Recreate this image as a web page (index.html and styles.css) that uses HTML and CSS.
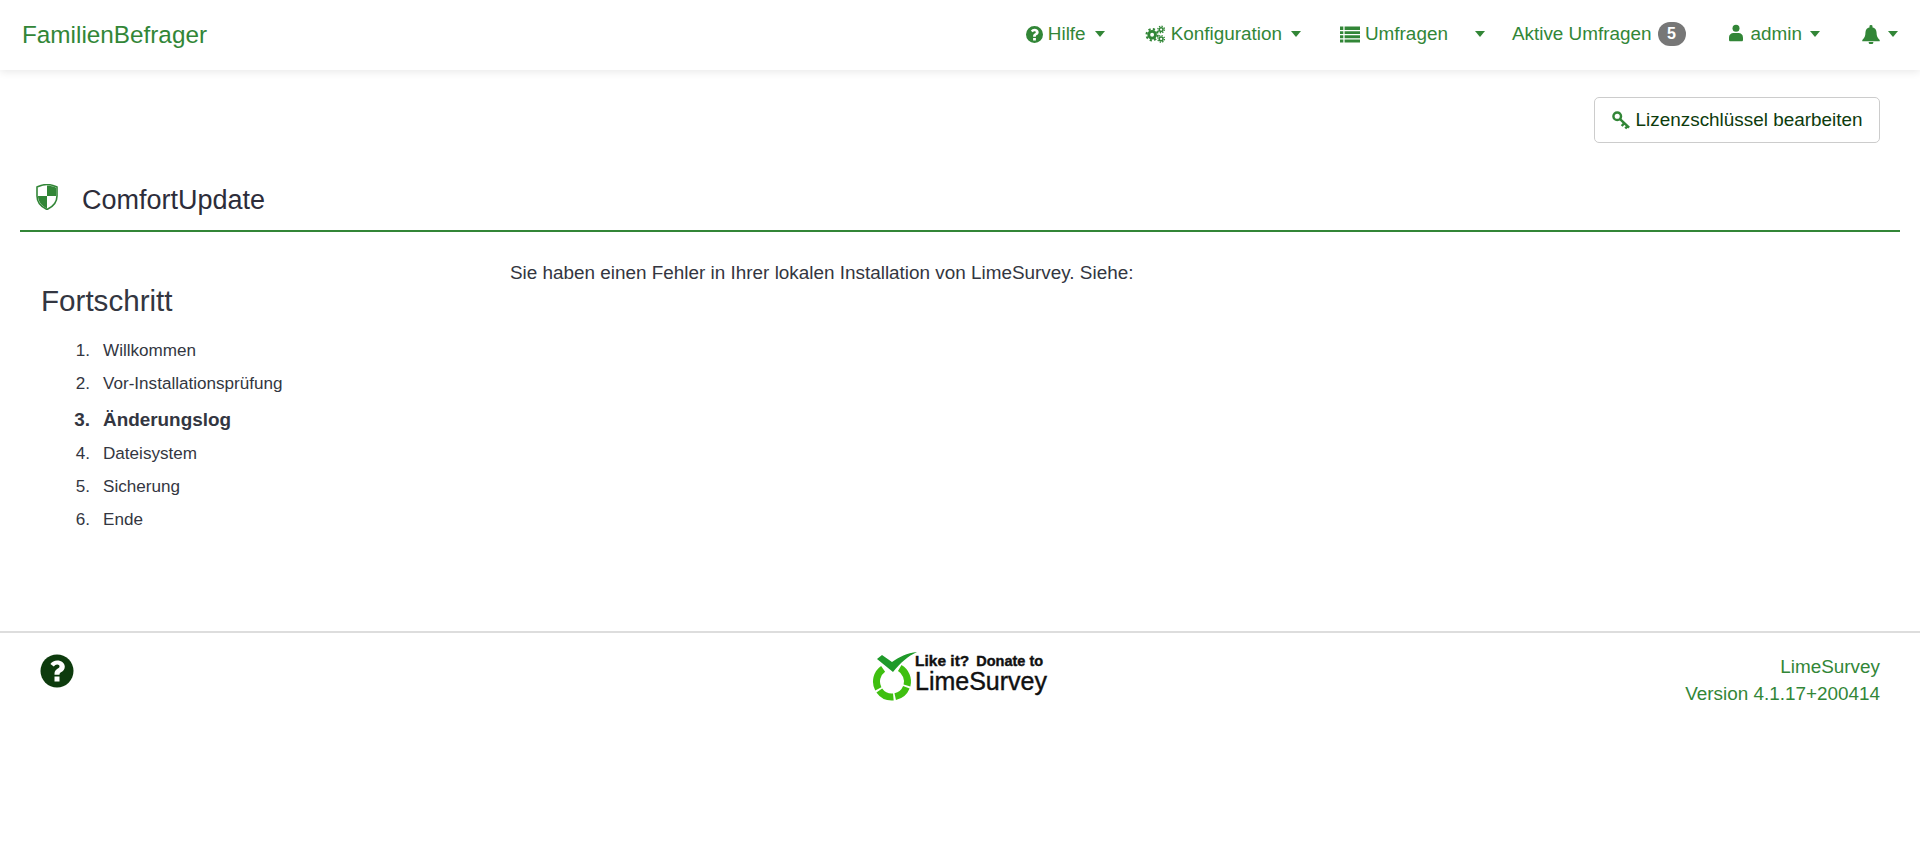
FILE: index.html
```html
<!DOCTYPE html>
<html>
<head>
  <meta charset="UTF-8">
  <title>ComfortUpdate</title>
  <link rel="stylesheet" href="styles.css">
</head>
<body>
  <nav class="navbar">
    <a class="brand">FamilienBefrager</a>
    <ul class="nav-items">
      <li class="nav-hilfe">
        <svg class="icon" viewBox="1 1 22 22"><path fill-rule="evenodd" d="M12 1a11 11 0 1 0 0 22 11 11 0 0 0 0-22zM10.200 16.500h3.600v3.300h-3.600zM12 4.500c3 0 5.400 1.800 5.400 4.500 0 2-1.200 3-2.400 3.800-.9.600-1.200 1-1.200 1.900v.3h-3.600v-.7c0-1.800.8-2.800 2-3.600.9-.6 1.500-1 1.500-1.700 0-.8-.7-1.300-1.600-1.300-1 0-1.700.5-2.400 1.400L7.300 7.100C8.300 5.500 10 4.500 12 4.500z"/></svg>
        Hilfe <span class="caret"></span>
      </li>
      <li class="nav-konfig">
        <svg class="icon icon-gears" viewBox="1 0 27 24"><g fill="none" stroke="currentColor"><circle cx="10" cy="13" r="4.500" stroke-width="3.800"/><circle cx="10" cy="13" r="7.500" stroke-width="2.800" stroke-dasharray="2.900 3"/><circle cx="22" cy="6" r="2.500" stroke-width="2"/><circle cx="22" cy="6" r="4.400" stroke-width="1.800" stroke-dasharray="1.800 1.650"/><circle cx="22" cy="18.500" r="2.500" stroke-width="2"/><circle cx="22" cy="18.500" r="4.400" stroke-width="1.800" stroke-dasharray="1.800 1.650"/></g></svg>
        Konfiguration <span class="caret"></span>
      </li>
      <li class="nav-umfragen">
        <svg class="icon icon-wide" viewBox="0 1 24 19"><path d="M0 1h4v4H0zM5.500 1H24v4H5.500zM0 6.500h4v3.500H0zM5.500 6.500H24v3.500H5.500zM0 11.500h4v3.500H0zM5.500 11.500H24v3.500H5.500zM0 16.500h4V20H0zM5.500 16.500H24V20H5.500z"/></svg>
        Umfragen
      </li>
      <li class="nav-split"><span class="caret"></span></li>
      <li class="nav-aktiv">Aktive Umfragen <span class="badge">5</span></li>
      <li class="nav-admin">
        <svg class="icon icon-user" viewBox="0 0 16 20"><circle cx="8" cy="4.500" r="4"/><path d="M1.500 19.500c-.8 0-1.500-.6-1.500-1.500v-3c0-3 2.500-5 5-5h6c2.500 0 5 2 5 5v3c0 .9-.7 1.500-1.500 1.500z"/></svg>
        admin <span class="caret"></span>
      </li>
      <li class="nav-bell">
        <svg class="icon icon-bell" viewBox="1 0 22 24"><path d="M12 0a2 2 0 0 0-1.700 2.700C7 3.400 5 6 5 9.500c0 5-1.500 7-4 9.500v1.500h22V19c-2.500-2.500-4-4.500-4-9.500 0-3.500-2-6.100-5.300-6.800A2 2 0 0 0 12 0zM9 21.500a3 3 0 0 0 6 0z"/></svg>
        <span class="caret"></span>
      </li>
    </ul>
  </nav>

  <div class="toolbar">
    <button class="btn">
      <svg class="icon-key" viewBox="0 0 20 20"><g fill="none" stroke="currentColor"><circle cx="5.500" cy="5.500" r="4" stroke-width="2.600"/><path d="M8.500 8.500l9.500 9M13 12.800l-2.800 3M16.300 15.900l-2.300 2.500" stroke-width="2.600"/></g></svg>
      Lizenzschlüssel bearbeiten
    </button>
  </div>

  <div class="page-title">
    <svg class="icon-shield" viewBox="0 0 22 26"><path d="M11 .500C7 .500 4 1.800 1 3v9c0 6 4.500 11 10 13.500C16.500 23 21 18 21 12V3C18 1.800 15 .500 11 .500z" fill="#fff" stroke="#328637" stroke-width="1.600"/><path d="M11 1.500c3.500 0 6.500 1 9 2.200V12h-9zM11 12v12.500c-5-2.500-9-7-9-12.500z" fill="#328637"/></svg>
    <h3>ComfortUpdate</h3>
  </div>

  <div class="content">
    <aside class="sidebar">
      <h2>Fortschritt</h2>
      <ol class="steps">
        <li>Willkommen</li>
        <li>Vor-Installationsprüfung</li>
        <li class="on">Änderungslog</li>
        <li>Dateisystem</li>
        <li>Sicherung</li>
        <li>Ende</li>
      </ol>
    </aside>
    <div class="message">Sie haben einen Fehler in Ihrer lokalen Installation von LimeSurvey. Siehe:</div>
  </div>

  <footer class="footer">
    <div class="foot-left">
      <svg class="icon-help" viewBox="0 0 34 34"><circle cx="17" cy="17" r="16.500" fill="#0d3b0d"/><path fill="#fff" d="M14.500 22.500h5v5h-5zM17.200 6.500c4.300 0 7.600 2.500 7.600 6.300 0 2.800-1.700 4.200-3.400 5.300-1.300.9-1.900 1.400-1.900 2.700h-5v-1c0-2.500 1.200-3.900 2.900-5 1.300-.9 2.100-1.400 2.100-2.400 0-1.100-1-1.800-2.300-1.800-1.400 0-2.400.7-3.400 2l-3.400-2.500c1.500-2.300 3.900-3.600 6.800-3.600z"/></svg>
    </div>
    <div class="foot-logo">
      <svg class="logo-ring" viewBox="0 0 46 50">
        <g fill="none" stroke="#3fbf10" stroke-width="7"><path d="M27.750 16.080A15.500 15.500 0 0 1 34.970 33.510"/><path d="M34.370 35.310A15.500 15.500 0 0 1 23.220 44.660"/><path d="M21.350 44.940A15.500 15.500 0 0 1 7.300 38.390"/><path d="M6.310 36.780A15.500 15.500 0 0 1 11.110 16.800"/></g>
        <path fill="#1f9a2a" d="M5 7L10 3 20 10C27 5 35 1 45 0 36 4 28 11 21 20z"/>
      </svg>
      <div class="logo-text">
        <div class="logo-top"><span class="like">Like it?</span> Donate to</div>
        <div class="logo-name">LimeSurvey</div>
      </div>
    </div>
    <div class="foot-right">
      <div>LimeSurvey</div>
      <div>Version 4.1.17+200414</div>
    </div>
  </footer>
</body>
</html>
```

FILE: styles.css
```css
body {
  font-family: "Liberation Sans", Arial, sans-serif;
  font-size: 18.9px;
  color: #333641;
  background: #fff;
  margin: 0;
}
.navbar {
  height: 70px;
  display: flex;
  justify-content: space-between;
  align-items: center;
  box-shadow: 0 2px 8px rgba(0,0,0,0.09);
  color: #328637;
}
.brand {
  font-size: 24.3px;
  margin-left: 22px;
}
.nav-items {
  display: flex;
  align-items: center;
  list-style: none;
  margin: 0;
  padding: 0 0 2px;
  font-size: 18.9px;
}
.nav-items li {
  display: flex;
  align-items: center;
  gap: 5px;
  white-space: nowrap;
}
.nav-hilfe { margin-right: 40px; }
.nav-konfig { margin-right: 39px; }
.nav-umfragen { margin-right: 27px; }
.nav-split { margin-right: 27px; }
.nav-aktiv { margin-right: 43px; }
.nav-admin { margin-right: 42px; }
.nav-bell { margin-right: 22px; }
.icon {
  width: 17px;
  height: 17px;
  fill: currentColor;
}
.icon-wide { width: 20px; }
.icon-gears { width: 21px; height: 18px; }
.icon-user { width: 14px; height: 18px; margin: -3px 3px 0 0; }
.icon-bell { width: 18px; height: 19px; margin-right: -1px; }
.caret {
  width: 0;
  height: 0;
  margin-left: 4px;
  border-top: 6px solid currentColor;
  border-left: 5.500px solid transparent;
  border-right: 5.500px solid transparent;
}
.nav-split .caret { margin-left: 0; }
.nav-admin .caret { margin-left: 3px; }
.badge {
  background: #777;
  color: #fff;
  font-size: 16px;
  font-weight: bold;
  line-height: 24px;
  width: 28px;
  margin-left: 1px;
  text-align: center;
  border-radius: 12px;
}
.toolbar {
  display: flex;
  justify-content: flex-end;
  padding: 27px 40px 0 0;
}
.btn {
  height: 46px;
  width: 286px;
  padding: 0;
  background: #fff;
  border: 1px solid #ccc;
  border-radius: 5px;
  font: inherit;
  color: #0d3b0d;
  display: flex;
  align-items: center;
  justify-content: center;
  gap: 5px;
}
.icon-key {
  width: 19px;
  height: 19px;
  color: #328637;
}
.page-title {
  display: flex;
  align-items: center;
  height: 58.5px;
  margin: 28px 20px 0;
  padding-left: 16px;
  border-bottom: 2px solid #328637;
  color: #2d2d3a;
}
.icon-shield {
  width: 22px;
  height: 26px;
  margin: -6px 24px 0 0;
}
.page-title h3 {
  font-size: 27px;
  font-weight: normal;
  margin: 0;
}
.content {
  display: flex;
  height: 399px;
}
.sidebar {
  width: 510px;
  padding-left: 41px;
  box-sizing: border-box;
}
.sidebar h2 {
  font-size: 29.6px;
  font-weight: normal;
  margin: 51px 0 15px;
  line-height: 36px;
}
.steps {
  margin: 0;
  padding: 0;
  list-style: none;
  counter-reset: step;
  font-size: 17.1px;
  line-height: 33px;
}
.steps li {
  display: flex;
  counter-increment: step;
}
.steps li::before {
  content: counter(step) ".";
  width: 49px;
  margin-right: 13px;
  text-align: right;
}
.steps .on {
  font-size: 18.9px;
  font-weight: bold;
  line-height: 35px;
  margin-top: 2px;
}
.message {
  padding-top: 30px;
  line-height: 21px;
}
.footer {
  display: flex;
  justify-content: space-between;
  border-top: 2px solid #ddd;
  padding: 22px 40px 0 40px;
  color: #328637;
}
.foot-left { width: 300px; }
.icon-help {
  width: 34px;
  height: 34px;
  margin-top: -1px;
}
.foot-logo {
  display: flex;
  align-items: flex-start;
  margin: -3px 1px 0 0;
  color: #111;
}
.logo-ring {
  width: 46px;
  height: 50px;
}
.logo-text {
  margin: 1px 0 0 -3px;
  -webkit-text-stroke: 0.4px #111;
}
.logo-top {
  font-size: 14.5px;
  font-weight: bold;
  line-height: 16px;
  white-space: nowrap;
}
.like {
  font-size: 15.5px;
  margin-right: 3px;
}
.logo-name {
  font-size: 25px;
  line-height: 24px;
}
.foot-right {
  width: 300px;
  text-align: right;
  line-height: 27px;
  margin-top: -2px;
}
```
